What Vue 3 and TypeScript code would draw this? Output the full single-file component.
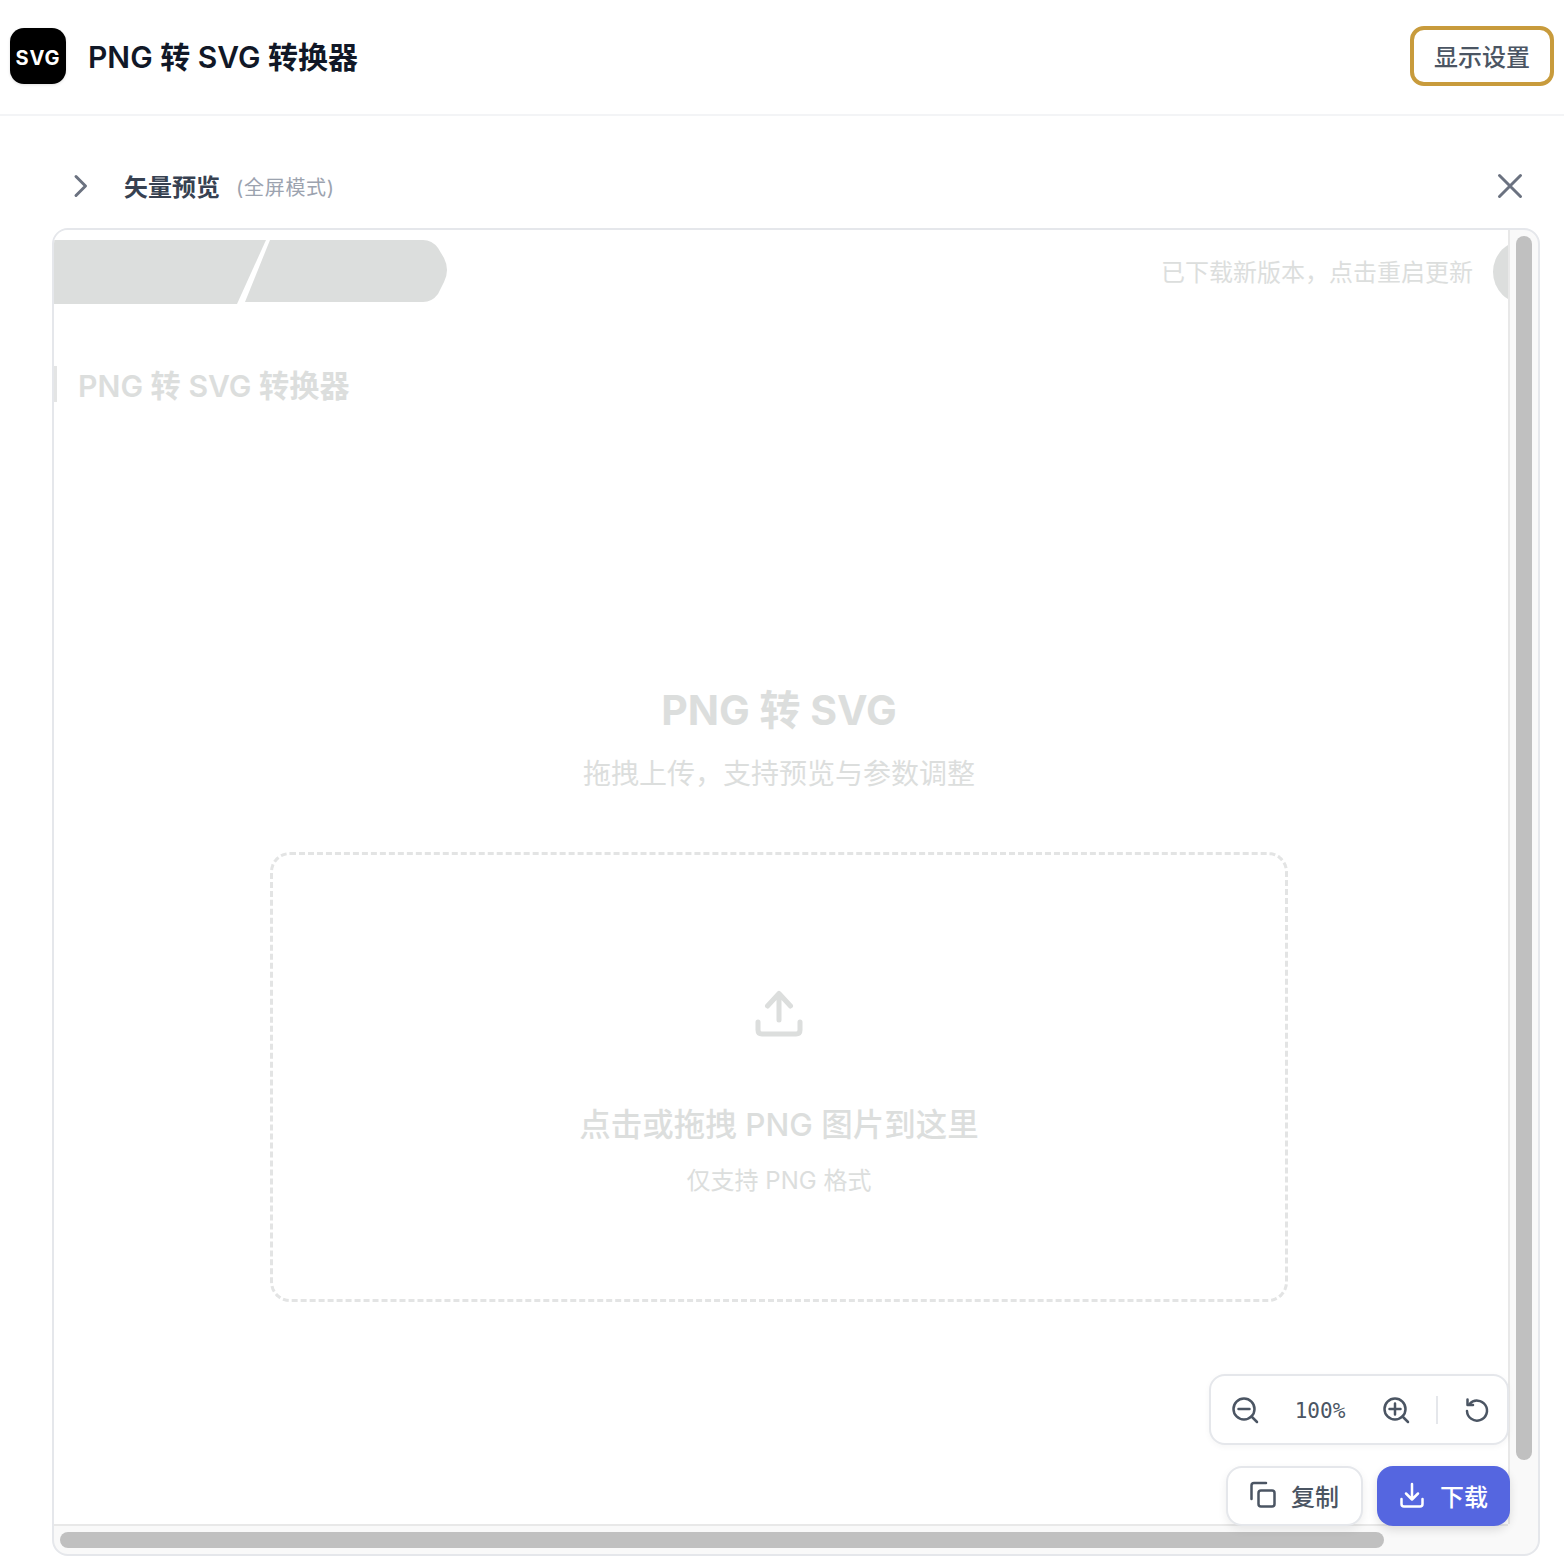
<script setup lang="ts">
const title = 'PNG 转 SVG 转换器'
</script>

<template>
  <div class="page">
    <header class="topbar">
      <div class="brand">
        <div class="logo">SVG</div>
        <h1>{{ title }}</h1>
      </div>
      <button class="settings">显示设置</button>
    </header>

    <main class="main">
      <div class="section-head">
        <div class="section-left">
          <svg class="chev" width="24" height="24" viewBox="0 0 24 24" fill="none" stroke="#6b7280" stroke-width="3" stroke-linecap="round" stroke-linejoin="round"><path d="M7 2.500 16.500 12 7 21.500"/></svg>
          <span class="section-title">矢量预览</span>
          <span class="section-note">(全屏模式)</span>
        </div>
        <svg class="close" width="28" height="28" viewBox="0 0 28 28" fill="none" stroke="#6b7280" stroke-width="3" stroke-linecap="round"><path d="M3.500 3.500 24.500 24.500M24.500 3.500 3.500 24.500"/></svg>
      </div>

      <section class="preview">
        <div class="viewport">
          <div class="traced-top">
            <svg class="ribbon" width="394" height="64" viewBox="0 0 394 64">
              <path d="M0 0H212L183 64H0Z" fill="#dcdedd"/>
              <path d="M216 0H369Q378 0 384 8L390 18Q393 24 393 30 393 36 390 42L384 54Q378 62 369 62H191Z" fill="#dcdedd"/>
            </svg>
            <div class="traced-notice">
              <span>已下载新版本，点击重启更新</span>
              <i class="traced-dot"></i>
            </div>
          </div>

          <div class="traced-brand">
            <i></i>
            <span>{{ title }}</span>
          </div>

          <div class="traced-hero">
            <h2>PNG 转 SVG</h2>
            <p class="traced-sub">拖拽上传，支持预览与参数调整</p>
            <div class="drop">
              <svg width="48" height="48" viewBox="0 0 48 48" fill="none" stroke="#dcdedd" stroke-width="5" stroke-linecap="round" stroke-linejoin="round"><path d="M24 5V31M12.500 17 24 4.500 35.500 17M3 33V41Q3 45 7 45H41Q45 45 45 41V33"/></svg>
              <p class="drop-main">点击或拖拽 PNG 图片到这里</p>
              <p class="drop-sub">仅支持 PNG 格式</p>
            </div>
          </div>
        </div>
        <div class="track-v"><div class="thumb-v"></div></div>
        <div class="track-h"><div class="thumb-h"></div></div>

        <div class="zoombar">
          <svg width="32" height="32" viewBox="0 0 32 32" fill="none" stroke="#4b5563" stroke-width="2.500" stroke-linecap="round"><circle cx="14" cy="15" r="10.500"/><path d="M8.500 15H19.500M21.500 22.500 27 28"/></svg>
          <span class="pct">100%</span>
          <svg width="32" height="32" viewBox="0 0 32 32" fill="none" stroke="#4b5563" stroke-width="2.500" stroke-linecap="round"><circle cx="14" cy="15" r="10.500"/><path d="M8.500 15H19.500M14 9.500V20.500M21.500 22.500 27 28"/></svg>
          <i class="sep"></i>
          <svg width="28" height="28" viewBox="0 0 28 28" fill="none" stroke="#4b5563" stroke-width="2.500" stroke-linecap="round" stroke-linejoin="round"><path d="M6.500 8A10 10 0 1 1 4 15"/><path d="M4.500 3.500V9H10"/></svg>
        </div>

        <div class="actions">
          <button class="btn ghost">
            <svg width="28" height="28" viewBox="0 0 28 28" fill="none" stroke="#4b5563" stroke-width="2.500" stroke-linecap="round" stroke-linejoin="round"><rect x="9.500" y="9.500" width="16" height="16" rx="2.500"/><path d="M2.500 18V4.500Q2.500 2 5 2H17"/></svg>
            复制
          </button>
          <button class="btn primary">
            <svg width="28" height="28" viewBox="0 0 28 28" fill="none" stroke="#fff" stroke-width="2.500" stroke-linecap="round" stroke-linejoin="round"><path d="M14 3V18M8 12.500 14 18.500 20 12.500M3.500 18V23Q3.500 25.500 6 25.500H22Q24.500 25.500 24.500 23V18"/></svg>
            下载
          </button>
        </div>
      </section>
    </main>
  </div>
</template>

<style>
html, body { margin: 0; background: #fff; }
</style>

<style scoped>
.page {
  width: 1564px;
  height: 1568px;
  overflow: hidden;
  background: #fff;
  font-family: Inter, "Noto Sans CJK SC", sans-serif;
  box-sizing: border-box;
}
.topbar {
  height: 116px;
  box-sizing: border-box;
  border-bottom: 2px solid #f3f4f6;
  padding: 0 10px 2px;
  display: flex;
  align-items: center;
  justify-content: space-between;
}
.brand { display: flex; align-items: center; gap: 22px; }
.logo {
  width: 56px;
  height: 56px;
  box-sizing: border-box;
  padding-top: 3px;
  border-radius: 14px;
  background: #000;
  color: #fff;
  font-size: 20px;
  font-weight: 700;
  letter-spacing: 1px;
  display: flex;
  align-items: center;
  justify-content: center;
  box-shadow: 0 1px 3px rgba(0,0,0,.12);
}
h1 {
  margin: 0;
  font-size: 30px;
  line-height: 40px;
  font-weight: 600;
  color: #111827;
  padding-top: 2px;
}
.settings {
  width: 144px;
  height: 60px;
  box-sizing: border-box;
  border: 4px solid #c89b3c;
  border-radius: 14px;
  background: #fff;
  color: #4b5563;
  font: 500 24px Inter, "Noto Sans CJK SC", sans-serif;
  padding: 0 0 2px;
}
.main { padding: 0 24px 0 52px; }
.section-head {
  height: 112px;
  display: flex;
  align-items: center;
  justify-content: space-between;
  padding: 28px 16px 0 17px;
  box-sizing: border-box;
}
.section-left { display: flex; align-items: center; }
.chev { margin-right: 31px; }
.section-title { font-size: 24px; font-weight: 600; color: #374151; margin: 0 16px 2px 0; }
.section-note { font-size: 20px; letter-spacing: .7px; color: #9ca3af; }
.preview {
  position: relative;
  width: 1488px;
  height: 1328px;
  box-sizing: border-box;
  border: 2px solid #e5e7eb;
  border-radius: 16px;
  background: #f9f9f9;
  display: grid;
  grid-template-columns: 1454px 30px;
  grid-template-rows: 1294px 30px;
}
.viewport {
  background: #fff;
  overflow: hidden;
  border-radius: 14px 0 0 0;
  grid-column: 1;
  grid-row: 1;
}
.traced-top {
  margin-top: 10px;
  height: 64px;
  display: flex;
  justify-content: space-between;
}
.ribbon { display: block; }
.traced-notice {
  display: flex;
  align-items: center;
  margin-right: -49px;
  color: #dcdedd;
  font-size: 24px;
  gap: 20px;
  height: 64px;
}
.traced-notice span { margin-bottom: 4px; }
.traced-dot {
  display: block;
  width: 64px;
  height: 64px;
  border-radius: 50%;
  background: #dcdedd;
}
.traced-brand {
  margin-top: 62px;
  height: 36px;
  display: flex;
  align-items: center;
  color: #dcdedd;
  font-size: 30.200px;
  font-weight: 600;
}
.traced-brand i { width: 3px; height: 36px; background: #e4e5e5; margin-right: 21px; }
.traced-hero {
  width: 1018px;
  margin: 284px 0 0 216px;
  display: flex;
  flex-direction: column;
  align-items: center;
  color: #dcdedd;
}
h2 { margin: 0; font-size: 41px; line-height: 48px; font-weight: 700; }
.traced-sub { margin: 20px 0 0; font-size: 28px; line-height: 40px; }
.drop {
  margin-top: 58px;
  width: 100%;
  height: 450px;
  box-sizing: border-box;
  border: 3px dashed #e3e4e4;
  border-radius: 20px;
  display: flex;
  flex-direction: column;
  align-items: center;
  padding-top: 134px;
}
.drop-main { margin: 66px 0 0; font-size: 31.500px; line-height: 44px; font-weight: 500; }
.drop-sub { margin: 18px 0 0; font-size: 24px; line-height: 32px; }
.track-v {
  grid-column: 2;
  grid-row: 1;
  border-left: 2px solid #e8e8e8;
  padding: 6px 6px 0;
}
.thumb-v { width: 16px; height: 1224px; border-radius: 8px; background: #c0c0c0; }
.track-h {
  grid-column: 1;
  grid-row: 2;
  border-top: 2px solid #e8e8e8;
  padding: 6px 0 0 6px;
}
.thumb-h { width: 1324px; height: 16px; border-radius: 8px; background: #c0c0c0; }
.zoombar {
  position: absolute;
  right: 29px;
  bottom: 109px;
  width: 300px;
  height: 71px;
  box-sizing: border-box;
  border: 2px solid #e5e7eb;
  border-radius: 16px;
  background: #fff;
  box-shadow: 0 2px 6px rgba(0,0,0,.04);
  display: flex;
  align-items: center;
  padding-left: 19px;
}
.pct {
  width: 116px;
  margin: 3px 3px 0 0;
  text-align: center;
  font: 21px "DejaVu Sans Mono", monospace;
  color: #4b5563;
}
.sep { width: 2px; height: 28px; background: #e5e7eb; margin: 0 25px 0 23px; }
.actions {
  position: absolute;
  right: 28px;
  bottom: 28px;
  display: flex;
  gap: 14px;
}
.btn {
  height: 60px;
  box-sizing: border-box;
  border-radius: 16px;
  display: flex;
  align-items: center;
  justify-content: center;
  gap: 14px;
  font: 500 24px Inter, "Noto Sans CJK SC", sans-serif;
  padding: 0 0 2px;
}
.btn svg { margin-left: -1px; }
.ghost { width: 137px; background: #fff; border: 2px solid #e5e7eb; color: #4b5563; box-shadow: 0 4px 10px rgba(0,0,0,.07); }
.primary { width: 133px; background: #5566e0; border: 0; color: #fff; box-shadow: 0 4px 10px rgba(0,0,0,.12); }
</style>
